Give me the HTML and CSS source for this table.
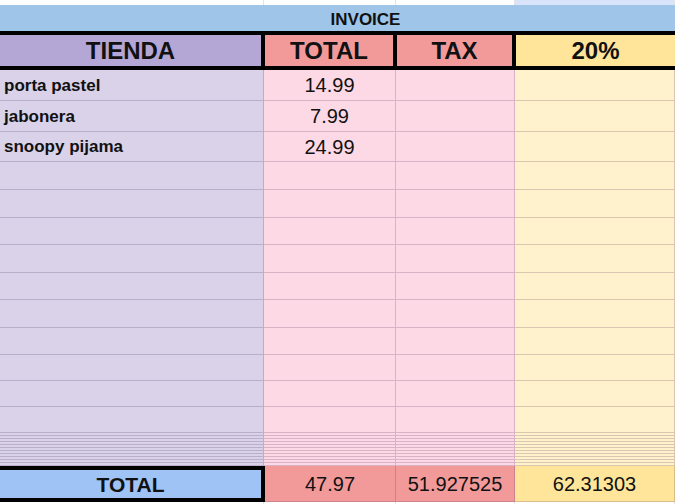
FILE: index.html
```html
<!DOCTYPE html>
<html>
<head>
<meta charset="utf-8">
<link rel="stylesheet" href="styles.css">
</head>
<body>
<div class="sheet">
  <div class="row grid top">
    <div class="cell"></div><div class="cell"></div><div class="cell"></div><div class="cell blue"></div>
  </div>
  <div class="band">INVOICE</div>
  <div class="row head">
    <div class="hcell ca">TIENDA</div>
    <div class="hcell cb">TOTAL</div>
    <div class="hcell cb">TAX</div>
    <div class="hcell cd">20%</div>
  </div>

  <div class="row grid r31">
    <div class="cell ba name">porta pastel</div><div class="cell bb num">14.99</div><div class="cell bb"></div><div class="cell bd"></div>
  </div>
  <div class="row grid r31">
    <div class="cell ba name">jabonera</div><div class="cell bb num">7.99</div><div class="cell bb"></div><div class="cell bd"></div>
  </div>
  <div class="row grid r30">
    <div class="cell ba name">snoopy pijama</div><div class="cell bb num">24.99</div><div class="cell bb"></div><div class="cell bd"></div>
  </div>

  <div class="row grid r28"><div class="cell ba"></div><div class="cell bb"></div><div class="cell bb"></div><div class="cell bd"></div></div>
  <div class="row grid r28"><div class="cell ba"></div><div class="cell bb"></div><div class="cell bb"></div><div class="cell bd"></div></div>
  <div class="row grid r27"><div class="cell ba"></div><div class="cell bb"></div><div class="cell bb"></div><div class="cell bd"></div></div>
  <div class="row grid r28"><div class="cell ba"></div><div class="cell bb"></div><div class="cell bb"></div><div class="cell bd"></div></div>
  <div class="row grid r27"><div class="cell ba"></div><div class="cell bb"></div><div class="cell bb"></div><div class="cell bd"></div></div>
  <div class="row grid r28"><div class="cell ba"></div><div class="cell bb"></div><div class="cell bb"></div><div class="cell bd"></div></div>
  <div class="row grid r27"><div class="cell ba"></div><div class="cell bb"></div><div class="cell bb"></div><div class="cell bd"></div></div>
  <div class="row grid r26"><div class="cell ba"></div><div class="cell bb"></div><div class="cell bb"></div><div class="cell bd"></div></div>
  <div class="row grid r26"><div class="cell ba"></div><div class="cell bb"></div><div class="cell bb"></div><div class="cell bd"></div></div>
  <div class="row grid r26"><div class="cell ba"></div><div class="cell bb"></div><div class="cell bb"></div><div class="cell bd"></div></div>

  <div class="row grid thin"><div class="cell ba"></div><div class="cell bb"></div><div class="cell bb"></div><div class="cell bd"></div></div>
  <div class="row grid thin"><div class="cell ba"></div><div class="cell bb"></div><div class="cell bb"></div><div class="cell bd"></div></div>
  <div class="row grid thin"><div class="cell ba"></div><div class="cell bb"></div><div class="cell bb"></div><div class="cell bd"></div></div>
  <div class="row grid thin"><div class="cell ba"></div><div class="cell bb"></div><div class="cell bb"></div><div class="cell bd"></div></div>
  <div class="row grid thin"><div class="cell ba"></div><div class="cell bb"></div><div class="cell bb"></div><div class="cell bd"></div></div>
  <div class="row grid thin"><div class="cell ba"></div><div class="cell bb"></div><div class="cell bb"></div><div class="cell bd"></div></div>
  <div class="row grid thin"><div class="cell ba"></div><div class="cell bb"></div><div class="cell bb"></div><div class="cell bd"></div></div>
  <div class="row grid thin"><div class="cell ba"></div><div class="cell bb"></div><div class="cell bb"></div><div class="cell bd"></div></div>
  <div class="row grid thin"><div class="cell ba"></div><div class="cell bb"></div><div class="cell bb"></div><div class="cell bd"></div></div>
  <div class="row grid thin"><div class="cell ba"></div><div class="cell bb"></div><div class="cell bb"></div><div class="cell bd"></div></div>
  <div class="row grid thin"><div class="cell ba"></div><div class="cell bb"></div><div class="cell bb"></div><div class="cell bd"></div></div>

  <div class="row total">
    <div class="tlabel">TOTAL</div>
    <div class="cell tb num">47.97</div>
    <div class="cell tb num">51.927525</div>
    <div class="cell td num">62.31303</div>
  </div>
  <div class="row grid tail"><div class="cell"></div><div class="cell"></div><div class="cell"></div><div class="cell"></div></div>
</div>
</body>
</html>
```

FILE: styles.css
```css
html, body {
  margin: 0;
  padding: 0;
  background: #ffffff;
  overflow: hidden;
}

body {
  font-family: "Liberation Sans", Arial, sans-serif;
  color: #111111;
  width: 675px;
  height: 504px;
}

.sheet {
  display: flex;
  flex-direction: column;
  width: 675px;
}

.row {
  box-sizing: border-box;
}

.grid {
  display: grid;
  grid-template-columns: 264px 132px 119px 1fr;
}

.cell {
  box-sizing: border-box;
  border-right: 1px solid rgba(70, 30, 70, 0.2);
  border-bottom: 1px solid rgba(70, 30, 70, 0.2);
  display: flex;
  align-items: center;
  line-height: 1;
  min-width: 0;
  overflow: hidden;
  white-space: nowrap;
}

.top { height: 5px; }
.top .cell { border-color: #e3e3e3; border-bottom: none; }
.top .blue { background: #d9e4fb; }

.band {
  height: 26px;
  background: #9fc5e8;
  display: flex;
  align-items: center;
  justify-content: center;
  padding-left: 56px;
  padding-top: 2px;
  box-sizing: border-box;
  font-weight: bold;
  font-size: 17px;
  line-height: 1;
}

.head {
  display: grid;
  grid-template-columns: 261px 128px 115px 1fr;
  column-gap: 4px;
  background: #000000;
  padding: 4px 0;
  height: 39px;
}

.hcell {
  display: flex;
  align-items: center;
  justify-content: center;
  font-weight: bold;
  font-size: 24px;
  line-height: 1;
}

.ca { background: #b4a7d6; }
.cb { background: #f29a9a; }
.cd { background: #ffe599; }

.ba { background: #d9d2e9; }
.bb { background: #fdd9e5; }
.bd { background: #fff2cc; }

.r31 { height: 31px; }
.r30 { height: 30px; }
.r28 { height: 28px; }
.r27 { height: 27px; }
.r26 { height: 26px; }
.thin { height: 3px; }

.name {
  font-weight: bold;
  font-size: 17px;
  padding-left: 4px;
}

.num {
  justify-content: center;
  font-size: 20px;
}

.total {
  display: grid;
  grid-template-columns: 265px 131px 119px 1fr;
  height: 36px;
}

.tlabel {
  box-sizing: border-box;
  background: #a0c3f6;
  border: 4px solid #000000;
  border-left: none;
  display: flex;
  align-items: center;
  justify-content: center;
  font-weight: bold;
  font-size: 21px;
  line-height: 1;
}

.tb { background: #f29a9a; }
.td { background: #ffe599; }

.tail { height: 4px; }
.tail .cell { border-color: #e3e3e3; border-bottom: none; }
```
